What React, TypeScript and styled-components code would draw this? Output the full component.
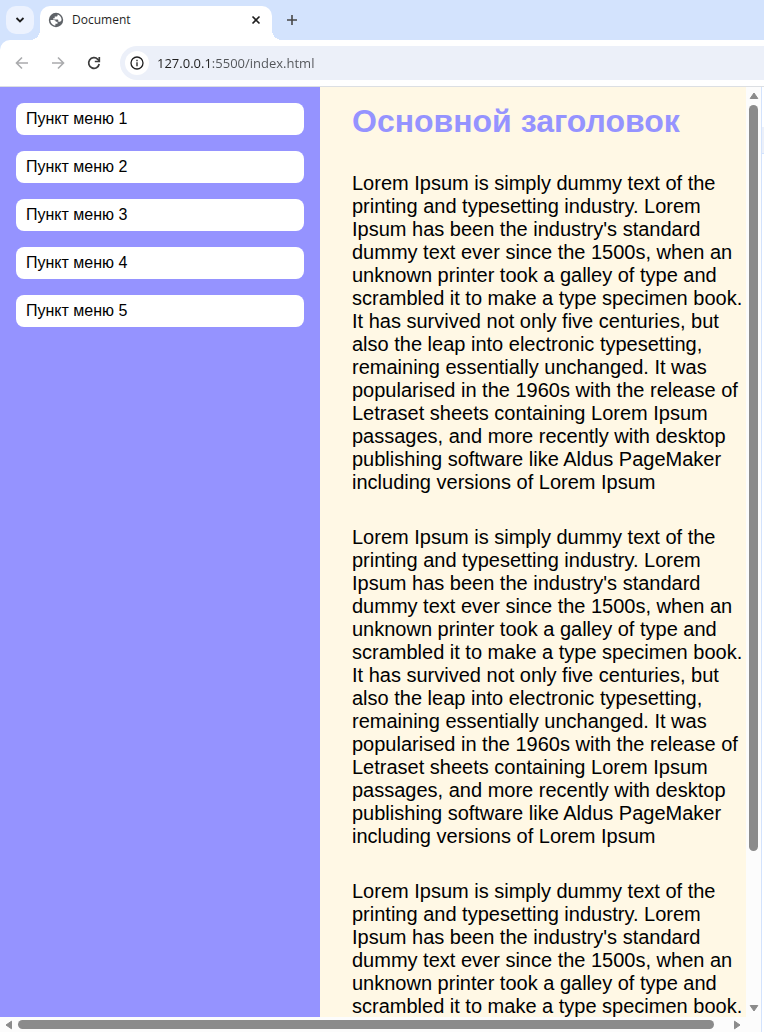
import React, { useState } from "react";
import styled, { createGlobalStyle } from "styled-components";

const GlobalStyle = createGlobalStyle`
  *, *::before, *::after { box-sizing: border-box; }
  body { margin: 0; }
  h1, p, ul { margin: 0; padding: 0; }
  button { border: 0; padding: 0; background: none; }
`;

const uiFont = `"Open Sans", "Noto Sans", sans-serif`;
const pageFont = `"Liberation Sans", Arial, sans-serif`;

const Browser = styled.div`
  display: flex;
  flex-direction: column;
  height: 100vh;
  overflow: hidden;
  background: #fff;
`;

const TabStrip = styled.header`
  display: flex;
  flex: none;
  height: 40px;
  padding: 6px 6px 0;
  background: #d3e3fd;
  font-family: ${uiFont};
`;

const IconButton = styled.button<{ $size: number; $color?: string; $fill?: string }>`
  display: flex;
  flex: none;
  align-items: center;
  justify-content: center;
  width: ${(p) => p.$size}px;
  height: ${(p) => p.$size}px;
  border-radius: 10px;
  color: ${(p) => p.$color ?? "#1f1f1f"};
  background: ${(p) => p.$fill ?? "transparent"};
`;

const Tab = styled.div`
  position: relative;
  display: flex;
  align-items: center;
  width: 232px;
  height: 34px;
  margin-left: 6px;
  padding: 0 6px 6px 8px;
  border-radius: 10px 10px 0 0;
  background: #fff;

  &::before,
  &::after {
    content: "";
    position: absolute;
    bottom: 0;
    width: 10px;
    height: 10px;
  }
  &::before {
    right: 100%;
    background: radial-gradient(circle at 0 0, transparent 10px, #fff 10px);
  }
  &::after {
    left: 100%;
    background: radial-gradient(circle at 100% 0, transparent 10px, #fff 10px);
  }
`;

const TabTitle = styled.span`
  flex: 1;
  margin-left: 8px;
  color: #1f1f1f;
  font-size: 12px;
  line-height: 18px;
`;

const NewTabSlot = styled.div`
  margin-left: 6px;
`;

const ToolbarBackdrop = styled.div`
  flex: none;
  background: #d3e3fd;
`;

const Toolbar = styled.nav`
  display: flex;
  align-items: center;
  gap: 8px;
  height: 47px;
  padding-left: 8px;
  border-bottom: 1px solid #dcdfe3;
  border-top-left-radius: 10px;
  background: #fff;
  font-family: ${uiFont};
`;

const AddressBar = styled.label`
  display: flex;
  flex: 1;
  align-items: center;
  gap: 8px;
  height: 34px;
  margin-left: 4px;
  padding-left: 5px;
  border-radius: 17px 0 0 17px;
  background: #ecf0f9;
`;

const SiteInfo = styled.span`
  display: flex;
  align-items: center;
  justify-content: center;
  width: 24px;
  height: 24px;
  border-radius: 12px;
  background: #fff;
  color: #1f1f1f;
`;

const AddressInput = styled.input`
  flex: 1;
  min-width: 0;
  height: 24px;
  padding: 0;
  border: 0;
  outline: 0;
  background: linear-gradient(90deg, #1f1f1f 54px, #515458 54px);
  background-clip: text;
  -webkit-background-clip: text;
  -webkit-text-fill-color: transparent;
  color: #474747;
  font-family: ${uiFont};
  font-size: 13px;
`;

const Viewport = styled.div`
  display: grid;
  flex: 1;
  grid-template-columns: minmax(0, 1fr) 15px 3px;
  grid-template-rows: minmax(0, 1fr) 15px;
  min-height: 0;
`;

const Page = styled.div`
  display: flex;
  overflow: hidden;
  background: #fff8e5;
  font-family: ${pageFont};
`;

const Sidebar = styled.aside`
  flex: none;
  width: 320px;
  padding: 16px;
  background: #9593ff;
`;

const Menu = styled.ul`
  display: flex;
  flex-direction: column;
  gap: 16px;
  list-style: none;
`;

const MenuLink = styled.a`
  display: block;
  height: 32px;
  padding: 0 10px;
  border-radius: 8px;
  background: #fff;
  color: #000;
  font-size: 16px;
  line-height: 32px;
  text-decoration: none;
`;

const Article = styled.main`
  display: flex;
  flex: 1;
  flex-direction: column;
  gap: 32px;
  min-width: 0;
  padding: 16px 0 0 32px;
`;

const Heading = styled.h1`
  color: #9593ff;
  font-size: 32px;
  line-height: 37px;
`;

const Paragraph = styled.p`
  color: #000;
  font-size: 20px;
  line-height: 23px;
`;

const Scrollbar = styled.div<{ $vertical?: boolean }>`
  display: flex;
  flex-direction: ${(p) => (p.$vertical ? "column" : "row")};
  align-items: center;
  background: #fcfcfc;
`;

const ScrollArrow = styled.button<{ $vertical?: boolean }>`
  display: flex;
  flex: none;
  align-items: center;
  justify-content: center;
  width: ${(p) => (p.$vertical ? 15 : 18)}px;
  height: ${(p) => (p.$vertical ? 18 : 15)}px;
  color: #8b8b8b;
`;

const ScrollTrack = styled.div<{ $vertical?: boolean }>`
  display: flex;
  flex: 1;
  flex-direction: ${(p) => (p.$vertical ? "column" : "row")};
`;

const ScrollThumb = styled.div<{ $vertical?: boolean; $share: number }>`
  flex: none;
  width: ${(p) => (p.$vertical ? "9px" : `${p.$share}%`)};
  height: ${(p) => (p.$vertical ? `${p.$share}%` : "9px")};
  border-radius: 5px;
  background: #8b8b8b;
`;

const ScrollCorner = styled.div`
  background: #fcfcfc;
`;

const WindowEdge = styled.div`
  grid-column: 3;
  grid-row: 1 / 3;
  padding-top: 40px;
  border-left: 1px solid #d3e3fd;
  background: #fff;
`;

const EdgePanel = styled.div`
  height: 27px;
  border-bottom: 1px solid #d3e3fd;
  background: #ecf0f9;
`;

const menuItems = [1, 2, 3, 4, 5].map((n) => `Пункт меню ${n}`);

const intro =
  "Lorem Ipsum is simply dummy text of the printing and typesetting industry. Lorem Ipsum has been the industry's standard dummy text ever since the 1500s, when an unknown printer took a galley of type and scrambled it to make a type specimen book.";

const lorem =
  intro +
  " It has survived not only five centuries, but also the leap into electronic typesetting, remaining essentially unchanged. It was popularised in the 1960s with the release of Letraset sheets containing Lorem Ipsum passages, and more recently with desktop publishing software like Aldus PageMaker including versions of Lorem Ipsum";

const StrokeIcon = ({ size, d, width = 2 }: { size: number; d: string; width?: number }) => (
  <svg width={size} height={size} viewBox={`0 0 ${size} ${size}`} fill="none" stroke="currentColor" strokeWidth={width} aria-hidden="true">
    <path d={d} />
  </svg>
);

const GlobeIcon = () => (
  <svg width="16" height="16" viewBox="0 0 16 16" aria-hidden="true">
    <circle cx="8" cy="8" r="7.2" fill="#5f6368" />
    <path d="M2.4 8h3.400c1.300 0 2 .8 2 1.800h1.700v1.900H7.400v1.900C4.600 13.400 2.400 11 2.400 8ZM9.600 2.600v.6c0 .8-.6 1.300-1.300 1.300H6.700v1.700H5.200v1.300h4.100c.6 0 1 .4 1 1v1.300h1.600c.7-.4 1.600-1 1.700-1.800 0-2.500-1.700-4.700-4-5.400Z" fill="#fff" />
  </svg>
);

const ReloadIcon = () => (
  <svg width="16" height="16" viewBox="0 0 16 16" fill="none" stroke="currentColor" strokeWidth="1.700" aria-hidden="true">
    <path d="M13.200 9A5.300 5.300 0 1 1 11.800 4.300L13.500 6" />
    <path d="M13.300 2v4.500H8.800" />
  </svg>
);

const InfoIcon = () => (
  <svg width="16" height="16" viewBox="0 0 16 16" fill="none" stroke="currentColor" strokeWidth="1.300" aria-hidden="true">
    <circle cx="8" cy="8" r="6" />
    <path d="M8 7.200v4M8 4.700v1.500" />
  </svg>
);

const Triangle = ({ turn }: { turn: number }) => (
  <svg width="10" height="10" viewBox="0 0 10 10" aria-hidden="true">
    <path d="M5 2 8.800 7.500H1.200Z" fill="currentColor" stroke="currentColor" strokeLinejoin="round" transform={`rotate(${turn} 5 5)`} />
  </svg>
);

export default function App() {
  const [address, setAddress] = useState("127.0.0.1:5500/index.html");

  return (
    <Browser>
      <GlobalStyle />
      <TabStrip>
        <IconButton $size={28} $fill="#ecf2fe" aria-label="Search tabs">
          <StrokeIcon size={10} d="M1.500 3 5 6.500 8.500 3" width={1.8} />
        </IconButton>
        <Tab>
          <GlobeIcon />
          <TabTitle>Document</TabTitle>
          <IconButton $size={20} aria-label="Close tab">
            <StrokeIcon size={10} d="m1.500 1.500 7 7m0-7-7 7" width={1.6} />
          </IconButton>
        </Tab>
        <NewTabSlot>
          <IconButton $size={28} $color="#474747" aria-label="New tab">
            <StrokeIcon size={12} d="M6 1v10M1 6h10" width={1.6} />
          </IconButton>
        </NewTabSlot>
      </TabStrip>

      <ToolbarBackdrop>
        <Toolbar aria-label="Browser">
          <IconButton $size={28} $color="#aaabad" aria-label="Back">
            <StrokeIcon size={14} d="M13 7H2M7 1.500 1.500 7 7 12.500" width={1.6} />
          </IconButton>
          <IconButton $size={28} $color="#aaabad" aria-label="Forward">
            <StrokeIcon size={14} d="M1 7h11M7 1.500 12.500 7 7 12.500" width={1.6} />
          </IconButton>
          <IconButton $size={28} $color="#3c3c3c" aria-label="Reload">
            <ReloadIcon />
          </IconButton>
          <AddressBar>
            <SiteInfo>
              <InfoIcon />
            </SiteInfo>
            <AddressInput
              type="text"
              aria-label="Address"
              value={address}
              onChange={(e) => setAddress(e.target.value)}
            />
          </AddressBar>
        </Toolbar>
      </ToolbarBackdrop>

      <Viewport>
        <Page>
          <Sidebar>
            <Menu>
              {menuItems.map((item) => (
                <li key={item}>
                  <MenuLink href="#">{item}</MenuLink>
                </li>
              ))}
            </Menu>
          </Sidebar>
          <Article>
            <Heading>Основной заголовок</Heading>
            <Paragraph>{lorem}</Paragraph>
            <Paragraph>{lorem}</Paragraph>
            <Paragraph>{intro}</Paragraph>
          </Article>
        </Page>
        <Scrollbar $vertical>
          <ScrollArrow $vertical aria-label="Scroll up">
            <Triangle turn={0} />
          </ScrollArrow>
          <ScrollTrack $vertical>
            <ScrollThumb $vertical $share={83.5} />
          </ScrollTrack>
          <ScrollArrow $vertical aria-label="Scroll down">
            <Triangle turn={180} />
          </ScrollArrow>
        </Scrollbar>
        <WindowEdge>
          <EdgePanel />
        </WindowEdge>
        <Scrollbar>
          <ScrollArrow aria-label="Scroll left">
            <Triangle turn={270} />
          </ScrollArrow>
          <ScrollTrack>
            <ScrollThumb $share={98} />
          </ScrollTrack>
          <ScrollArrow aria-label="Scroll right">
            <Triangle turn={90} />
          </ScrollArrow>
        </Scrollbar>
        <ScrollCorner />
      </Viewport>
    </Browser>
  );
}
